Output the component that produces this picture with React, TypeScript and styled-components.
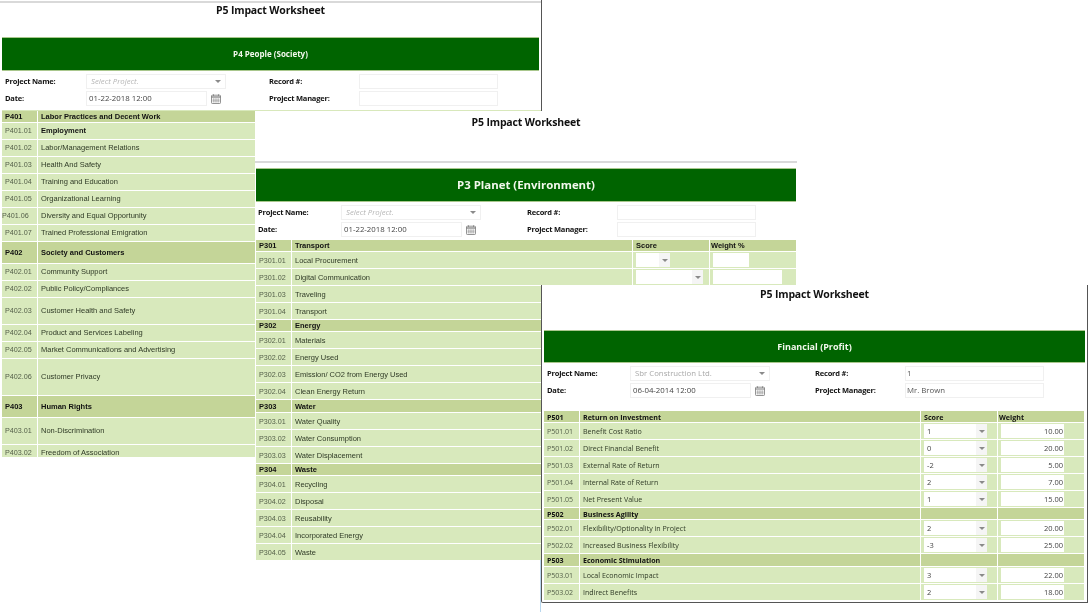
import React from "react";
import styled, { createGlobalStyle } from "styled-components";

const Global = createGlobalStyle`
  html, body { margin: 0; padding: 0; background: #fff; }
  * { box-sizing: border-box; }
`;

const SEGOE = `"Open Sans", "Noto Sans", sans-serif`;
const ARIAL = `"Liberation Sans", Arial, sans-serif`;

const Stage = styled.div`
  position: relative;
  width: 1089px;
  height: 612px;
  overflow: hidden;
  background: #fff;
  font-family: ${SEGOE};
  filter: blur(0.35px);
`;

const Win = styled.section<{ $l: number; $t: number; $w: number; $h: number; $framed?: boolean; $edge?: boolean }>`
  position: absolute;
  left: ${(p) => p.$l}px;
  top: ${(p) => p.$t}px;
  width: ${(p) => p.$w}px;
  height: ${(p) => p.$h}px;
  background: #fff;
  overflow: hidden;
  border-right: ${(p) => (p.$edge || p.$framed ? "1px solid #555" : "none")};
  border-left: ${(p) => (p.$framed ? "1px solid #555" : "none")};
  border-bottom: ${(p) => (p.$framed ? "1px solid #555" : "none")};
  border-bottom-left-radius: ${(p) => (p.$framed ? "2px" : "0")};
`;

const EdgeLine = styled.div`
  position: absolute;
  left: 540px;
  top: 457px;
  width: 1px;
  height: 155px;
  background: #b9d7ee;
`;

const Rule = styled.div<{ $top: number; $bottom: number }>`
  height: 2px;
  margin: ${(p) => p.$top}px 0 ${(p) => p.$bottom}px;
  background: #d9d9d9;
`;

const Title = styled.h1<{ $h: number; $pt: number }>`
  margin: 0;
  height: ${(p) => p.$h}px;
  padding-top: ${(p) => p.$pt}px;
  font: 700 10.5px/14px ${SEGOE};
  letter-spacing: -0.15px;
  color: #111;
  text-align: center;
`;

const Banner = styled.div<{ $h: number; $x: number; $size: number }>`
  height: ${(p) => p.$h}px;
  margin: 0 ${(p) => p.$x}px;
  display: flex;
  align-items: center;
  justify-content: center;
  background: #006400;
  border: 1px solid #a9c78d;
  border-width: 1px 0;
  color: #f2f8ec;
  font: 700 ${(p) => p.$size}px/1 ${SEGOE};
`;

const Form = styled.div<{ $pl: number; $lw: number; $gap: number; $pb: number }>`
  display: grid;
  grid-template-columns: ${(p) => p.$lw}px 140px ${(p) => p.$gap}px 90px 139px;
  grid-auto-rows: 15px;
  row-gap: 2px;
  padding: 3px 0 ${(p) => p.$pb}px ${(p) => p.$pl}px;
  align-items: center;
`;

const Label = styled.label`
  font: 700 7.5px/15px ${SEGOE};
  letter-spacing: -0.2px;
  color: #111;
  white-space: nowrap;
`;

const Spacer = styled.span``;

const Field = styled.div<{ $muted?: boolean; $ph?: boolean; $plain?: boolean }>`
  position: relative;
  height: 15px;
  padding-left: ${(p) => (p.$plain ? 1 : 4)}px;
  border: 1px solid #f0f0f0;
  background: #fff;
  font: ${(p) => (p.$ph ? "italic" : "normal")} 400 7.8px/13px ${SEGOE};
  color: ${(p) => (p.$ph ? "#b5b5b5" : p.$muted ? "#a8a8a8" : "#555")};
  white-space: nowrap;
`;

const Caret = styled.span<{ $r?: number }>`
  position: absolute;
  right: ${(p) => p.$r ?? 3}px;
  top: 50%;
  margin-top: -1.5px;
  width: 0;
  height: 0;
  border-left: 3px solid transparent;
  border-right: 3px solid transparent;
  border-top: 3px solid #8a8a8a;
`;

const DateRow = styled.div`
  display: flex;
  align-items: center;
  gap: 4px;
`;

const DateBox = styled(Field)`
  width: 121px;
  padding-left: 2px;
  color: #444;
`;

const Table = styled.div<{ $x: number; $font: string; $top?: boolean; $size: number; $codeSize: number; $lift?: boolean }>`
  display: flex;
  flex-direction: column;
  row-gap: 1px;
  margin-left: ${(p) => p.$x}px;
  font-family: ${(p) => p.$font};
  font-size: ${(p) => p.$size}px;
  border-top: ${(p) => (p.$top ? "1px solid #d8e8bb" : "none")};
  --code-size: ${(p) => p.$codeSize}px;
  --lift: ${(p) => (p.$lift ? "1px" : "0")};
`;

const Row = styled.div<{ $h: number }>`
  display: grid;
  grid-template-columns: 35px 340px 76px 86px;
  column-gap: 1px;
  height: ${(p) => p.$h}px;
  flex: none;
`;

const Cell = styled.div<{ $head?: boolean; $pl?: number; $strong?: boolean; $code?: boolean }>`
  display: flex;
  align-items: center;
  background: ${(p) => (p.$head ? "#c4d598" : "#d8e9bc")};
  padding-left: ${(p) => p.$pl ?? 3}px;
  padding-bottom: var(--lift);
  font-size: ${(p) => (p.$code ? "var(--code-size)" : "inherit")};
  font-weight: ${(p) => (p.$head || p.$strong ? 700 : 400)};
  color: ${(p) => (p.$head || p.$strong ? "#111" : p.$code ? "#55604a" : "#2f3a26")};
  white-space: nowrap;
  overflow: hidden;
`;

const ScoreBox = styled.div<{ $w: number }>`
  position: relative;
  width: ${(p) => p.$w}px;
  height: 14px;
  padding-left: 3px;
  background: linear-gradient(to right, #fff calc(100% - 11px), #f5f5f5 calc(100% - 11px));
  font: 400 7.5px/14px ${SEGOE};
  color: #444;
`;

const NumBox = styled.div<{ $w: number }>`
  width: ${(p) => p.$w}px;
  height: 14px;
  padding-right: 1px;
  background: #fff;
  font: 400 7.5px/15px ${SEGOE};
  color: #444;
  text-align: right;
`;

const Calendar = () => (
  <svg width="10" height="10" viewBox="0 0 10 10" fill="none" stroke="#777" strokeWidth="0.8">
    <rect x="0.5" y="1.2" width="9" height="8.3" rx="0.8" />
    <path d="M0.5 3h9" strokeWidth="1.2" />
    <path d="M2.5 0.3v1.6M7.5 0.3v1.6" />
    <path d="M2.5 4.3v4M4.2 4.3v4M5.9 4.3v4M7.6 4.3v4M1.4 5.2h7.2M1.4 6.5h7.2M1.4 7.8h7.2" strokeWidth="0.5" stroke="#999" />
  </svg>
);

type FormProps = {
  pl: number; lw: number; gap: number; pb: number;
  project?: string; date: string; record?: string; manager?: string;
};

const SheetForm = ({ pl, lw, gap, pb, project, date, record, manager }: FormProps) => (
  <Form $pl={pl} $lw={lw} $gap={gap} $pb={pb}>
    <Label>Project Name:</Label>
    <Field $ph={!project} $muted={!!project}>
      {project ?? "Select Project."}
      <Caret $r={4} />
    </Field>
    <Spacer />
    <Label>Record #:</Label>
    <Field $plain>{record}</Field>
    <Label>Date:</Label>
    <DateRow>
      <DateBox>{date}</DateBox>
      <Calendar />
    </DateRow>
    <Spacer />
    <Label>Project Manager:</Label>
    <Field $plain>{manager}</Field>
  </Form>
);

type R = {
  c: string; n: string; h?: number; head?: boolean; strong?: boolean; flush?: boolean;
  s?: string; w?: string; sw?: number; ww?: number; hs?: string; hw?: string;
};

type RowsProps = { rows: R[]; x: number; font: string; top?: boolean; size: number; codeSize: number; lift?: boolean };

const Rows = ({ rows, x, font, top, size, codeSize, lift }: RowsProps) => (
  <Table $x={x} $font={font} $top={top} $size={size} $codeSize={codeSize} $lift={lift}>
    {rows.map((r) => (
      <Row key={r.c + r.n} $h={r.h ?? (r.head ? 11 : 16)}>
        <Cell $head={r.head} $code={!r.head} $pl={r.flush ? 0 : 3}>{r.c}</Cell>
        <Cell $head={r.head} $strong={r.strong}>{r.n}</Cell>
        <Cell $head={r.head}>
          {r.hs}
          {r.sw ? (
            <ScoreBox $w={r.sw}>
              {r.s}
              <Caret $r={2} />
            </ScoreBox>
          ) : null}
        </Cell>
        <Cell $head={r.head} $pl={r.hw ? 1 : 3}>
          {r.hw}
          {r.ww ? <NumBox $w={r.ww}>{r.w}</NumBox> : null}
        </Cell>
      </Row>
    ))}
  </Table>
);

const people: R[] = [
  { c: "P401", n: "Labor Practices and Decent Work", head: true },
  { c: "P401.01", n: "Employment", strong: true },
  { c: "P401.02", n: "Labor/Management Relations" },
  { c: "P401.03", n: "Health And Safety" },
  { c: "P401.04", n: "Training and Education" },
  { c: "P401.05", n: "Organizational Learning" },
  { c: "P401.06", n: "Diversity and Equal Opportunity", flush: true },
  { c: "P401.07", n: "Trained Professional Emigration" },
  { c: "P402", n: "Society and Customers", head: true, h: 21 },
  { c: "P402.01", n: "Community Support" },
  { c: "P402.02", n: "Public Policy/Compliances" },
  { c: "P402.03", n: "Customer Health and Safety", h: 26 },
  { c: "P402.04", n: "Product and Services Labeling" },
  { c: "P402.05", n: "Market Communications and Advertising" },
  { c: "P402.06", n: "Customer Privacy", h: 36 },
  { c: "P403", n: "Human Rights", head: true, h: 21 },
  { c: "P403.01", n: "Non-Discrimination", h: 26 },
  { c: "P403.02", n: "Freedom of Association" },
];

const planet: R[] = [
  { c: "P301", n: "Transport", head: true, hs: "Score", hw: "Weight %" },
  { c: "P301.01", n: "Local Procurement", sw: 34, ww: 36 },
  { c: "P301.02", n: "Digital Communication", sw: 67, ww: 69 },
  { c: "P301.03", n: "Traveling" },
  { c: "P301.04", n: "Transport" },
  { c: "P302", n: "Energy", head: true },
  { c: "P302.01", n: "Materials" },
  { c: "P302.02", n: "Energy Used" },
  { c: "P302.03", n: "Emission/ CO2 from Energy Used" },
  { c: "P302.04", n: "Clean Energy Return" },
  { c: "P303", n: "Water", head: true, h: 12 },
  { c: "P303.01", n: "Water Quality" },
  { c: "P303.02", n: "Water Consumption" },
  { c: "P303.03", n: "Water Displacement" },
  { c: "P304", n: "Waste", head: true },
  { c: "P304.01", n: "Recycling" },
  { c: "P304.02", n: "Disposal" },
  { c: "P304.03", n: "Reusability" },
  { c: "P304.04", n: "Incorporated Energy" },
  { c: "P304.05", n: "Waste" },
];

const fin = (c: string, n: string, s: string, w: string): R => ({ c, n, s, w, sw: 63, ww: 63 });

const financial: R[] = [
  { c: "P501", n: "Return on Investment", head: true, hs: "Score", hw: "Weight" },
  fin("P501.01", "Benefit Cost Ratio", "1", "10.00"),
  fin("P501.02", "Direct Financial Benefit", "0", "20.00"),
  fin("P501.03", "External Rate of Return", "-2", "5.00"),
  fin("P501.04", "Internal Rate of Return", "2", "7.00"),
  fin("P501.05", "Net Present Value", "1", "15.00"),
  { c: "P502", n: "Business Agility", head: true },
  fin("P502.01", "Flexibility/Optionality in Project", "2", "20.00"),
  fin("P502.02", "Increased Business Flexibility", "-3", "25.00"),
  { c: "P503", n: "Economic Stimulation", head: true, h: 12 },
  fin("P503.01", "Local Economic Impact", "3", "22.00"),
  fin("P503.02", "Indirect Benefits", "2", "18.00"),
];

export default function App() {
  return (
    <Stage>
      <Global />
      <Win $l={0} $t={0} $w={542} $h={457} $edge>
        <Rule $top={1} $bottom={0} />
        <Title $h={34} $pt={0}>P5 Impact Worksheet</Title>
        <Banner $h={34} $x={2} $size={8}>P4 People (Society)</Banner>
        <SheetForm pl={5} lw={81} gap={43} pb={4} date="01-22-2018 12:00" />
        <Rows rows={people} x={2} font={ARIAL} top size={7.5} codeSize={7.2} lift />
      </Win>
      <EdgeLine />
      <Win $l={255} $t={111} $w={542} $h={449}>
        <Title $h={50} $pt={4}>P5 Impact Worksheet</Title>
        <Rule $top={0} $bottom={5} />
        <Banner $h={34} $x={1} $size={11.4}>P3 Planet (Environment)</Banner>
        <SheetForm pl={3} lw={83} gap={46} pb={3} date="01-22-2018 12:00" />
        <Rows rows={planet} x={1} font={ARIAL} size={7.5} codeSize={7.2} />
      </Win>
      <Win $l={541} $t={285} $w={547} $h={318} $framed>
        <Title $h={45} $pt={2}>P5 Impact Worksheet</Title>
        <Banner $h={33} $x={2} $size={9}>Financial (Profit)</Banner>
        <SheetForm
          pl={5} lw={83} gap={45} pb={13}
          project="Sbr Construction Ltd." date="06-04-2014 12:00" record="1" manager="Mr. Brown"
        />
        <Rows rows={financial} x={2} font={SEGOE} size={7.1} codeSize={7} />
      </Win>
    </Stage>
  );
}
